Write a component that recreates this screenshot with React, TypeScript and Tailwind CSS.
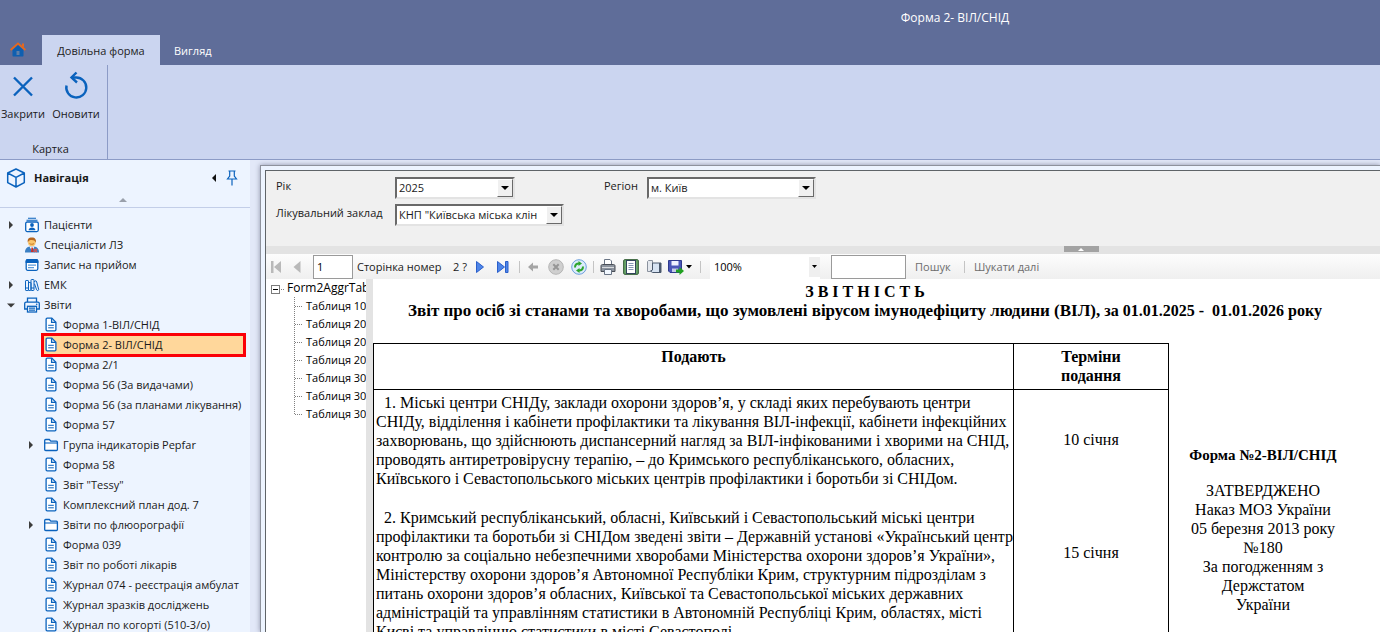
import { useState } from 'react';
import type { ReactNode } from 'react';

const BLUE = '#0a62bd';

type TreeItem = {
  label: string;
  icon: 'patients' | 'doctor' | 'calendar' | 'books' | 'printer' | 'file' | 'folder';
  arrow?: 'right' | 'down';
  child?: boolean;
};

const treeItems: TreeItem[] = [
  { label: 'Пацієнти', icon: 'patients', arrow: 'right' },
  { label: 'Спеціалісти ЛЗ', icon: 'doctor' },
  { label: 'Запис на прийом', icon: 'calendar' },
  { label: 'ЕМК', icon: 'books', arrow: 'right' },
  { label: 'Звіти', icon: 'printer', arrow: 'down' },
  { label: 'Форма 1-ВІЛ/СНІД', icon: 'file', child: true },
  { label: 'Форма 2- ВІЛ/СНІД', icon: 'file', child: true },
  { label: 'Форма 2/1', icon: 'file', child: true },
  { label: 'Форма 56 (За видачами)', icon: 'file', child: true },
  { label: 'Форма 56 (за планами лікування)', icon: 'file', child: true },
  { label: 'Форма 57', icon: 'file', child: true },
  { label: 'Група індикаторів Pepfar', icon: 'folder', arrow: 'right', child: true },
  { label: 'Форма 58', icon: 'file', child: true },
  { label: 'Звіт "Tessy"', icon: 'file', child: true },
  { label: 'Комплексний план дод. 7', icon: 'file', child: true },
  { label: 'Звіти по флюорографії', icon: 'folder', arrow: 'right', child: true },
  { label: 'Форма 039', icon: 'file', child: true },
  { label: 'Звіт по роботі лікарів', icon: 'file', child: true },
  { label: 'Журнал 074 - реєстрація амбулат', icon: 'file', child: true },
  { label: 'Журнал зразків досліджень', icon: 'file', child: true },
  { label: 'Журнал по когорті (510-3/о)', icon: 'file', child: true },
];

const outline = ['Таблиця 1000', 'Таблиця 2000', 'Таблиця 2001', 'Таблиця 2002', 'Таблиця 3000', 'Таблиця 3001', 'Таблиця 3002'];

const firstParagraph = [
  '\u00a0\u00a01. Міські центри СНІДу, заклади охорони здоров’я, у складі яких перебувають центри',
  'СНІДу, відділення і кабінети профілактики та лікування ВІЛ-інфекції, кабінети інфекційних',
  'захворювань, що здійснюють диспансерний нагляд за ВІЛ-інфікованими і хворими на СНІД,',
  'проводять антиретровірусну терапію, – до Кримського республіканського, обласних,',
  'Київського і Севастопольського міських центрів профілактики і боротьби зі СНІДом.',
];

const secondParagraph = [
  '\u00a0\u00a02. Кримський республіканський, обласні, Київський і Севастопольський міські центри',
  'профілактики та боротьби зі СНІДом зведені звіти – Державній установі «Український центр',
  'контролю за соціально небезпечними хворобами Міністерства охорони здоров’я України»,',
  'Міністерству охорони здоров’я Автономної Республіки Крим, структурним підрозділам з',
  'питань охорони здоров’я обласних, Київської та Севастопольської міських державних',
  'адміністрацій та управлінням статистики в Автономній Республіці Крим, областях, місті',
  'Києві та управлінню статистики в місті Севастополі.',
];

function TreeIcon({ name }: { name: TreeItem['icon'] }) {
  const line = { fill: 'none', stroke: BLUE, strokeWidth: 1.3 };
  switch (name) {
    case 'patients':
      return (
        <svg width="16" height="16" viewBox="0 0 16 16">
          <path d="M4 1.2h8M2.5 3.2h11" stroke={BLUE} strokeWidth="1.1" />
          <rect x="1.7" y="5" width="12.6" height="9.6" rx="1.5" {...line} fill="#fff" />
          <circle cx="8" cy="8" r="1.9" fill={BLUE} />
          <path d="M4.6 13.2c0-3.6 6.8-3.6 6.8 0z" fill={BLUE} />
        </svg>
      );
    case 'doctor':
      return (
        <svg width="16" height="16" viewBox="0 0 16 16">
          <path d="M1 15.5c0-4 2-5.5 5-6h4c3 .5 5 2 5 6z" fill="#3a7fc4" />
          <path d="M5.500 9.500 8 14l2.500-4.500z" fill="#fff" />
          <path d="M7.400 10.500h1.400l.8 4.500H7z" fill="#c9302c" />
          <path d="m10 12 3 3M13 12l-3 3" stroke="#d9534f" strokeWidth="1.200" />
          <circle cx="7.800" cy="5.500" r="3.800" fill="#fbc56c" />
          <path d="M3.800 5.500C3 1 6 .2 8 .5c3 0 4.600 2 3.800 5.200-.8-2-2-2.700-4-2.700-2 0-3.200.6-4 2.500z" fill="#b5651d" />
          <path d="M5.500 6.500c1 1 3.500 1 4.600 0" stroke="#c77a2a" fill="none" />
        </svg>
      );
    case 'calendar':
      return (
        <svg width="16" height="16" viewBox="0 0 16 16">
          <rect x="2.200" y="2.700" width="11.600" height="10.600" rx="1.500" {...line} fill="#fff" />
          <path d="M1.600 4.500c0-1.500.8-2.400 2-2.400h8.800c1.200 0 2 .9 2 2.400V6H1.600z" fill={BLUE} />
          <path d="M4 8.200h8M4 10.600h6" stroke="#5b9bdb" strokeWidth="1.200" />
        </svg>
      );
    case 'books':
      return (
        <svg width="16" height="16" viewBox="0 0 16 16">
          <g {...line} strokeWidth="1">
            <rect x="1.500" y="3.500" width="3" height="10" rx=".6" />
            <rect x="4.500" y="5.500" width="2.500" height="8" rx=".6" />
            <rect x="7" y="2.500" width="3" height="11" rx=".6" />
            <path d="M10.500 5c0-1.600 2-1.600 2.200 0l2 7.500c0 1.200-1.800 1.300-2.100.3l-2.100-6" />
            <path d="M1.500 11h3M7 11h3" />
          </g>
        </svg>
      );
    case 'printer':
      return (
        <svg width="16" height="16" viewBox="0 0 16 16">
          <g {...line}>
            <path d="M3.500 5V1.200h9V5" />
            <path d="M3.300 12H.7V6.500c0-.9.500-1.400 1.400-1.400h11.800c.9 0 1.400.5 1.400 1.400V12h-2.600" />
            <rect x="3.500" y="9.300" width="9" height="5.700" fill="#fff" />
            <path d="M5 11.200h6M5 13.200h6" />
          </g>
          <circle cx="12.700" cy="7.200" r=".8" fill={BLUE} />
        </svg>
      );
    case 'folder':
      return (
        <svg width="16" height="16" viewBox="0 0 16 16">
          <path d="M1.700 12.500v-9c0-.6.400-1 1-1h3.600l1.500 1.700h5.600c.6 0 1 .4 1 1v7.300c0 .6-.4 1-1 1H2.700c-.6 0-1-.4-1-1z" {...line} fill="#fff" />
          <path d="M1.700 6h12.600" stroke={BLUE} strokeWidth="1.100" />
        </svg>
      );
    default:
      return (
        <svg width="16" height="16" viewBox="0 0 16 16">
          <path d="M3.100 2.200c0-.7.400-1.100 1.100-1.100h4.600l4.100 4.200v7.400c0 .7-.4 1.100-1.100 1.100H4.200c-.7 0-1.100-.4-1.100-1.100z" {...line} fill="#fff" />
          <path d="M8.600 1.200v4.200h4.200" {...line} />
          <path d="M5.200 8.300h5.600M5.200 10.800h5.600" stroke={BLUE} strokeWidth="1" />
        </svg>
      );
  }
}

function Arrow({ dir }: { dir?: 'right' | 'down' }) {
  if (!dir) return null;
  return (
    <svg width="8" height="8" viewBox="0 0 8 8">
      <path d={dir === 'right' ? 'M2 0l4 4-4 4z' : 'M0 2.500h8l-4 4z'} fill="#3c3c3c" />
    </svg>
  );
}

function Combo({ id, label, value, labelClass, boxClass }: { id: string; label: string; value: string; labelClass: string; boxClass: string }) {
  return (
    <>
      <label htmlFor={id} className={`shrink-0 self-start pt-px leading-4 ${labelClass}`}>{label}</label>
      <div className={`relative h-[22px] shrink-0 border-2 border-t-[#696969] border-l-[#696969] border-r-[#e3e3e3] border-b-[#e3e3e3] bg-white ${boxClass}`}>
        <select id={id} className="h-full w-full appearance-none bg-white pl-[2px] pr-4 text-[11px] leading-4 outline-none">
          <option>{value}</option>
        </select>
        <span className="pointer-events-none absolute top-0 right-0 flex h-[18px] w-4 items-center justify-center border border-t-white border-l-white border-r-[#696969] border-b-[#696969] bg-[#f0f0f0]">
          <svg width="8" height="4" viewBox="0 0 8 4"><path d="M0 0h8L4 4z" fill="#000" /></svg>
        </span>
      </div>
    </>
  );
}

function ToolButton({ label, className = 'w-[23px]', children }: { label: string; className?: string; children: ReactNode }) {
  return (
    <button type="button" aria-label={label} className={`flex h-6 shrink-0 items-center justify-center ${className}`}>
      {children}
    </button>
  );
}

function Separator({ className }: { className: string }) {
  return <span className={`h-3 w-px shrink-0 bg-[#c4c4c4] ${className}`} />;
}

function Header() {
  return (
    <header className="shrink-0 bg-[#5f6d99] text-white">
      <div className="flex h-[35px] items-center pl-[530px]">
        <h1 className="w-full text-center text-[12px]">Форма 2- ВІЛ/СНІД</h1>
      </div>
      <nav className="flex h-[30px]">
        <button type="button" aria-label="Головна" className="flex w-[42px] items-center pl-[10px]">
          <svg width="16" height="16" viewBox="0 0 16 16">
            <path d="M2.500 8 8 3l5.500 5v5.500c0 .6-.4 1-1 1h-9c-.6 0-1-.4-1-1z" fill="#0f5fb0" />
            <rect x="6.500" y="9" width="3" height="4" fill="#5f7fa8" />
            <path d="M.6 8 8 1.300 15.400 8" fill="none" stroke="#e8681c" strokeWidth="1.700" />
            <path d="M12 1.500h2v4l-2-1.800z" fill="#e8681c" />
          </svg>
        </button>
        <button type="button" className="w-[118px] bg-[#cbd5f0] pt-px text-[#222]">Довільна форма</button>
        <button type="button" className="px-[14px] pt-px">Вигляд</button>
      </nav>
    </header>
  );
}

function Ribbon() {
  return (
    <section className="flex h-[95px] shrink-0 border-b border-[#8c9bc6] bg-[#cbd5f0]">
      <div className="flex w-[108px] flex-col border-r border-[#8c9bc6]">
        <div className="flex pt-[6px]">
          <button type="button" className="flex w-[46px] flex-col items-center gap-[5px]">
            <svg width="30" height="30" viewBox="0 0 30 30">
              <path d="M6 6.500l18 18M24 6.500l-18 18" stroke={BLUE} strokeWidth="2.400" />
            </svg>
            <span>Закрити</span>
          </button>
          <button type="button" className="flex w-[60px] flex-col items-center gap-[5px]">
            <svg width="30" height="30" viewBox="0 0 30 30">
              <path d="M5.500 14.500a10 10 0 1 0 9.500-8h-3" fill="none" stroke={BLUE} strokeWidth="2.400" />
              <path d="M15.500 1.500l-5 5 5.500 5" fill="none" stroke={BLUE} strokeWidth="2.400" />
            </svg>
            <span>Оновити</span>
          </button>
        </div>
        <p className="mt-auto mb-[2px] pr-[6px] text-center">Картка</p>
      </div>
    </section>
  );
}

function Sidebar() {
  const [selected, setSelected] = useState('Форма 2- ВІЛ/СНІД');

  return (
    <aside className="flex w-[250px] shrink-0 flex-col bg-[#edf4ff]">
      <div className="flex h-[36px] shrink-0 items-center pl-[6px] pr-3">
        <svg width="20" height="20" viewBox="0 0 20 20">
          <path d="M10 1l8.300 4v9.600L10 19l-8.300-4.400V5zM1.700 5 10 9.400 18.300 5M10 9.400V19" fill="none" stroke={BLUE} strokeWidth="1.500" strokeLinejoin="round" />
        </svg>
        <h2 className="ml-2 flex-1 font-bold">Навігація</h2>
        <button type="button" aria-label="Згорнути" className="mr-[10px]">
          <svg width="4" height="8" viewBox="0 0 4 8"><path d="M4 0v8L0 4z" fill="#111" /></svg>
        </button>
        <button type="button" aria-label="Закріпити">
          <svg width="12" height="16" viewBox="0 0 12 16">
            <path d="M2.500 1h7M3.700 1v5L1.500 9h9L8.300 6V1M6 9v6.500" fill="none" stroke={BLUE} strokeWidth="1.200" />
          </svg>
        </button>
      </div>
      <div className="flex h-3 shrink-0 justify-center border-b border-[#c3cee8] pt-[2px] pr-1">
        <svg width="8" height="4" viewBox="0 0 8 4"><path d="M0 4h8L4 0z" fill="#9aa0ab" /></svg>
      </div>
      <ul className="overflow-hidden pt-[7px]">
        {treeItems.map((item) => {
          const active = item.label === selected;
          return (
            <li key={item.label} className={`flex h-5 items-center pr-1 ${item.child ? 'pl-[27px]' : 'pl-[7px]'}`}>
              <span className={`flex shrink-0 items-center ${item.child ? 'w-[14px]' : 'w-[15px]'}`}><Arrow dir={item.arrow} /></span>
              <button
                type="button"
                onClick={() => setSelected(item.label)}
                className={`flex min-w-0 flex-1 items-center gap-1 overflow-hidden pl-[2px] text-left whitespace-nowrap ${active ? 'h-6 bg-[#ffd79b] outline-3 -outline-offset-3 outline-[#fb0007]' : 'h-5'}`}
              >
                <span className="shrink-0"><TreeIcon name={item.icon} /></span>
                <span>{item.label}</span>
              </button>
            </li>
          );
        })}
      </ul>
    </aside>
  );
}

function Filters() {
  return (
    <form className="flex h-[75px] shrink-0 flex-col gap-[5px] bg-[#f0f0f0] pt-[6px] pl-[10px]">
      <div className="flex">
        <Combo id="year" label="Рік" value="2025" labelClass="w-[119px]" boxClass="w-[120px]" />
        <Combo id="region" label="Регіон" value="м. Київ" labelClass="ml-[89px] w-[43px]" boxClass="w-[169px]" />
      </div>
      <div className="flex">
        <Combo id="clinic" label="Лікувальний заклад" value={'КНП "Київська міська клін'} labelClass="w-[119px]" boxClass="w-[169px]" />
      </div>
    </form>
  );
}

function Toolbar() {
  return (
    <div className="flex h-[25px] shrink-0 items-center bg-linear-to-b from-[#fdfdfd] to-[#efefef]">
      <ToolButton label="Перша сторінка" className="w-5">
        <svg width="12" height="12" viewBox="0 0 12 12"><path d="M1 0h2.500v12H1zM11 0v12L4 6z" fill="#b9b9b9" /></svg>
      </ToolButton>
      <ToolButton label="Попередня сторінка" className="w-[22px]">
        <svg width="8" height="12" viewBox="0 0 8 12"><path d="M7.500 0v12L.5 6z" fill="#b9b9b9" /></svg>
      </ToolButton>
      <input aria-label="Сторінка" defaultValue="1" className="ml-[5px] h-6 w-10 shrink-0 border border-[#9a9a9a] bg-white px-[3px] text-[11px] text-black outline-none" />
      <span className="ml-1 w-[96px] shrink-0 whitespace-nowrap">Сторінка номер</span>
      <span className="w-[15px] shrink-0 whitespace-nowrap">2 ?</span>
      <ToolButton label="Наступна сторінка">
        <svg width="8" height="12" viewBox="0 0 8 12"><path d="M.5.5v11l7-5.500z" fill="#4f86e8" stroke="#2a5fcb" /></svg>
      </ToolButton>
      <ToolButton label="Остання сторінка">
        <svg width="12" height="12" viewBox="0 0 12 12"><path d="M.5.500v11l7-5.500zM8.500.500h2.500v11H8.500z" fill="#4f86e8" stroke="#2a5fcb" /></svg>
      </ToolButton>
      <Separator className="mr-[1px] ml-[5px]" />
      <ToolButton label="Назад">
        <svg width="10" height="10" viewBox="0 0 10 10"><path d="M0 5l5-4.500v3h5v3H5v3z" fill="#a5a5a5" /></svg>
      </ToolButton>
      <ToolButton label="Зупинити">
        <svg width="16" height="16" viewBox="0 0 16 16">
          <circle cx="8" cy="8" r="7.300" fill="#cfcfcf" stroke="#b5b5b5" />
          <path d="M5.300 5.300l5.400 5.400M10.700 5.300l-5.400 5.400" stroke="#969696" strokeWidth="2" />
        </svg>
      </ToolButton>
      <ToolButton label="Оновити звіт">
        <svg width="16" height="16" viewBox="0 0 16 16">
          <circle cx="8" cy="8" r="7.300" fill="#dcecfb" stroke="#6c9fdc" />
          <path d="M4 8.500c0-2.700 1.500-4 4-4M12 7.500c0 2.700-1.500 4-4 4" fill="none" stroke="#2da52d" strokeWidth="2" />
          <path d="M7.500 2l3.500 2.500L7.500 7zM8.500 9 5 11.500 8.500 14z" fill="#2da52d" />
        </svg>
      </ToolButton>
      <Separator className="mr-[2px] ml-[3px]" />
      <ToolButton label="Друк">
        <svg width="16" height="16" viewBox="0 0 16 16">
          <path d="M4.500 6V.500h5.500l1.500 1.500v4" fill="#fff" stroke="#6a7585" />
          <path d="M1 7c0-.8.500-1.500 1.500-1.500h11c1 0 1.500.7 1.500 1.500v5.500H1z" fill="#8d949e" stroke="#4a4f57" />
          <path d="M2 8.500h12" stroke="#d9dce0" />
          <path d="M4.500 10.500h7v5h-7z" fill="#f2f8ff" stroke="#6a7585" />
        </svg>
      </ToolButton>
      <ToolButton label="Макет друку">
        <svg width="16" height="16" viewBox="0 0 16 16">
          <rect x=".7" y=".7" width="14.600" height="14.600" rx="1" fill="#6aa76a" stroke="#28552b" />
          <rect x="3.500" y="1.500" width="9" height="13" fill="#fff" stroke="#33455c" />
          <path d="M5.500 4.500h5M5.500 6.500h5M5.500 8.500h5M5.500 10.500h5" stroke="#8398b3" />
        </svg>
      </ToolButton>
      <ToolButton label="Параметри сторінки">
        <svg width="16" height="16" viewBox="0 0 16 16">
          <path d="M1.500 2.500l1-1h4v10l-2 1h-3z" fill="#e4e8ee" stroke="#8a929e" />
          <path d="M6.500 4h8.500v9.500H6.500l-2-1.500 2-1z" fill="#d7e3f2" stroke="#4a586c" />
          <path d="M13 4h2v9h-2z" fill="#4a586c" />
        </svg>
      </ToolButton>
      <ToolButton label="Експорт" className="w-[29px]">
        <svg width="16" height="16" viewBox="0 0 16 16">
          <path d="M.5 1.500h13v12H2l-1.500-1.500z" fill="#4a56b8" stroke="#2f3a8c" />
          <path d="M3.500 2h7v4.500h-7z" fill="#eef1ff" />
          <path d="M4 9.500h6V13H4z" fill="#c5cbe8" />
          <path d="M8 10.500h3.500V8l4.500 4-4.500 4v-2.500H8z" fill="#21a121" />
        </svg>
        <svg width="6" height="4" viewBox="0 0 6 4" className="ml-[2px]"><path d="M0 0h6L3 3.500z" fill="#000" /></svg>
      </ToolButton>
      <Separator className="mr-[9px] ml-[6px]" />
      <div className="relative h-6 w-[110px] shrink-0 bg-white">
        <select aria-label="Масштаб" className="h-full w-full appearance-none bg-white pl-1 text-[11px] text-black outline-none">
          <option>100%</option>
        </select>
        <span className="pointer-events-none absolute top-[2px] right-0 flex h-5 w-[11px] items-center justify-center bg-[#efefef]">
          <svg width="5" height="3" viewBox="0 0 5 3"><path d="M0 0h5L2.500 3z" fill="#000" /></svg>
        </span>
      </div>
      <input aria-label="Текст для пошуку" className="ml-[11px] h-6 w-[75px] shrink-0 border border-[#9a9a9a] bg-white px-1 outline-none" />
      <button type="button" className="ml-[9px] w-[49px] shrink-0 text-left text-[#6d6d6d]">Пошук</button>
      <Separator className="mr-[9px]" />
      <button type="button" className="shrink-0 whitespace-nowrap text-[#6d6d6d]">Шукати далі</button>
    </div>
  );
}

function Outline() {
  return (
    <div className="w-[100px] shrink-0 overflow-hidden bg-white text-black">
      <div className="flex h-[18px] items-center pl-[5px] whitespace-nowrap">
        <svg width="16" height="18" viewBox="0 0 16 18" className="shrink-0">
          <rect x=".5" y="6.500" width="8" height="8" fill="#fff" stroke="#7b7b7b" />
          <path d="M2 10.500h5" stroke="#000" />
          <path d="M10 10.500h3" stroke="#808080" strokeDasharray="1 1" />
        </svg>
        <span className="text-[12px]">Form2AggrTab</span>
      </div>
      <ul className="ml-7">
        {outline.map((name, i) => (
          <li key={name} className="flex h-[18px] items-center whitespace-nowrap">
            <svg width="12" height="18" viewBox="0 0 12 18" className="shrink-0">
              <path d={i === outline.length - 1 ? 'M.5 0v10' : 'M.5 0v18'} stroke="#808080" strokeDasharray="1 1" />
              <path d="M1 9.500h8" stroke="#808080" strokeDasharray="1 1" />
            </svg>
            <span>{name}</span>
          </li>
        ))}
      </ul>
    </div>
  );
}

function Lines({ rows }: { rows: string[] }) {
  return (
    <>
      {rows.map((row) => (
        <span key={row} className="block whitespace-nowrap">{row}</span>
      ))}
    </>
  );
}

function Report() {
  return (
    <article className="min-w-0 flex-1 overflow-hidden bg-white font-['Liberation_Serif',serif] text-[16px] leading-[19px] text-black">
      <div className="w-[984px]">
        <div className="h-[64px] pt-[3px] text-center font-bold whitespace-nowrap">
          <p>З В І Т Н І С Т Ь</p>
          <p>
            <span className="text-[17px]">Звіт про осіб зі станами та хворобами, що зумовлені вірусом імунодефіциту людини (ВІЛ),</span>
            {' '}за 01.01.2025 -&nbsp; 01.01.2026 року
          </p>
        </div>
        <div className="flex">
          <table className="w-[796px] shrink-0 table-fixed border-collapse border border-black">
            <thead>
              <tr className="h-[46px] border-b border-black align-top">
                <th className="w-[640px] border-r border-black pt-[3px]">Подають</th>
                <th className="px-10 pt-[3px]">Терміни подання</th>
              </tr>
            </thead>
            <tbody>
              <tr>
                <td className="border-r border-black pt-[3px] pl-[2px] align-top"><Lines rows={firstParagraph} /></td>
                <td className="text-center">10 січня</td>
              </tr>
              <tr>
                <td className="border-r border-black pt-5 pl-[2px] align-top"><Lines rows={secondParagraph} /></td>
                <td className="pb-6 text-center">15 січня</td>
              </tr>
            </tbody>
          </table>
          <div className="flex-1 pt-[103px] text-center">
            <p className="text-[15px] font-bold whitespace-nowrap">Форма №2-ВІЛ/СНІД</p>
            <p className="mt-4">
              ЗАТВЕРДЖЕНО<br />
              Наказ МОЗ України<br />
              05 березня 2013 року<br />
              №180<br />
              За погодженням з<br />
              Держстатом<br />
              України
            </p>
          </div>
        </div>
      </div>
    </article>
  );
}

export default function App() {
  return (
    <div className="flex h-screen flex-col overflow-hidden bg-[#e2e8f8] font-['Open_Sans','Noto_Sans',sans-serif] text-[11px] leading-4 text-[#1a1a1a]">
      <Header />
      <Ribbon />
      <div className="flex min-h-0 flex-1">
        <Sidebar />
        <main className="mt-[5px] ml-[10px] flex min-w-0 flex-1 flex-col border-t border-l border-[#8e929c] bg-[#edf4ff] pt-1 pl-1 shadow-[0_0_5px_#8e93a8]">
          <div className="flex min-h-0 flex-1 flex-col border-t border-l border-[#5f6468]">
            <Filters />
            <div className="flex h-2 shrink-0 justify-center bg-[#e3e3e3] pl-[516px]">
              <button type="button" aria-label="Сховати параметри" className="flex h-[6px] w-[35px] items-center justify-center bg-[#a3a3a3]">
                <svg width="6" height="3" viewBox="0 0 6 3"><path d="M0 3h6L3 0z" fill="#fff" /></svg>
              </button>
            </div>
            <Toolbar />
            <div className="flex min-h-0 flex-1">
              <Outline />
              <div className="w-[7px] shrink-0 bg-[#e3e3e3]" />
              <Report />
            </div>
          </div>
        </main>
      </div>
    </div>
  );
}
